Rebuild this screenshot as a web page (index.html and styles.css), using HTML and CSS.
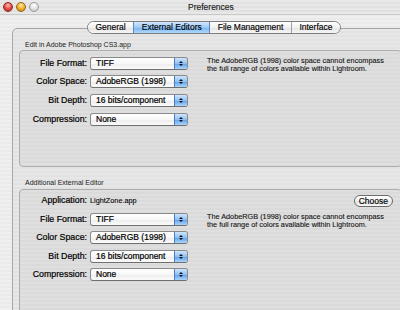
FILE: index.html
```html
<!DOCTYPE html>
<html>
<head>
  <title>Preferences</title>
  <link rel="stylesheet" href="styles.css">
</head>
<body>
<div class="window">
  <div class="titlebar">
    <div class="lights">
      <span class="light close"></span>
      <span class="light minimize"></span>
      <span class="light zoom"></span>
    </div>
    <div class="title">Preferences</div>
  </div>

  <div class="pane">
    <div class="tabs">
      <span class="tab">General</span>
      <span class="tab selected">External Editors</span>
      <span class="tab">File Management</span>
      <span class="tab">Interface</span>
    </div>

    <!-- photoshop -->
    <div class="group-title">Edit in Adobe Photoshop CS3.app</div>
    <div class="group">
      <span class="field-label">File Format:</span>
      <div class="popup"><span class="popup-value">TIFF</span><span class="popup-arrows"></span></div>
      <p class="note">The AdobeRGB (1998) color space cannot encompass<br>the full range of colors available within Lightroom.</p>

      <span class="field-label">Color Space:</span>
      <div class="popup"><span class="popup-value">AdobeRGB (1998)</span><span class="popup-arrows"></span></div>

      <span class="field-label">Bit Depth:</span>
      <div class="popup"><span class="popup-value">16 bits/component</span><span class="popup-arrows"></span></div>

      <span class="field-label">Compression:</span>
      <div class="popup"><span class="popup-value">None</span><span class="popup-arrows"></span></div>
    </div>

    <!-- additional editor -->
    <div class="group-title second">Additional External Editor</div>
    <div class="group group-extra">
      <span class="field-label">Application:</span>
      <span class="app-name">LightZone.app</span>
      <button class="choose" type="button">Choose</button>
      <p class="note note-lower">The AdobeRGB (1998) color space cannot encompass<br>the full range of colors available within Lightroom.</p>

      <span class="field-label">File Format:</span>
      <div class="popup"><span class="popup-value">TIFF</span><span class="popup-arrows"></span></div>

      <span class="field-label">Color Space:</span>
      <div class="popup"><span class="popup-value">AdobeRGB (1998)</span><span class="popup-arrows"></span></div>

      <span class="field-label">Bit Depth:</span>
      <div class="popup"><span class="popup-value">16 bits/component</span><span class="popup-arrows"></span></div>

      <span class="field-label">Compression:</span>
      <div class="popup"><span class="popup-value">None</span><span class="popup-arrows"></span></div>
    </div>
  </div>
</div>
</body>
</html>
```

FILE: styles.css
```css
body {
    margin: 0;
    height: 310px;
    overflow: hidden;
    font-family: 'Liberation Sans', Arial, sans-serif;
    color: #000;
}

.window {
    height: 310px;
    background: repeating-linear-gradient(to bottom, #efefef 0 2px, #eaeaea 2px 4px);
}

/* title bar */
.titlebar {
    height: 14px;
    display: flex;
    align-items: center;
    border-bottom: 1px solid #c9c9c9;
    background: repeating-linear-gradient(to bottom, #e8e8e8 0 2px, #e1e1e1 2px 4px);
}

.lights {
    display: flex;
    gap: 3px;
    padding-left: 3px;
}

.light {
    width: 10px;
    height: 10px;
    box-sizing: border-box;
    border-radius: 50%;
}

.close {
    background: radial-gradient(circle at 50% 30%, #fbc2bc 0, #e4544a 45%, #b3221b 100%);
    border: 1px solid #8e2a22;
}

.minimize {
    background: radial-gradient(circle at 50% 30%, #fff0b8 0, #f3b431 45%, #c77c07 100%);
    border: 1px solid #97661a;
}

.zoom {
    background: radial-gradient(circle at 50% 30%, #ffffff 0, #e3e3e3 50%, #b9b9b9 100%);
    border: 1px solid #9a9a9a;
}

.title {
    margin-left: 149px;
    font-size: 8.5px;
    color: #1a1a1a;
    -webkit-text-stroke: 0.15px #1a1a1a;
}

/* tab pane */
.pane {
    width: 383px;
    margin: 13px 0 0 12px;
    padding: 0 6px;
    border: 1px solid #a6a6a6;
    border-radius: 5px;
    background: repeating-linear-gradient(to bottom, #e7e7e7 0 2px, #e2e2e2 2px 4px);
}

.tabs {
    display: flex;
    width: fit-content;
    margin: -8px 0 0 68px;
    border: 1px solid #7c7c7c;
    border-radius: 7px;
    overflow: hidden;
}

.tab {
    height: 11px;
    line-height: 11px;
    padding: 0 7.5px;
    font-size: 8.5px;
    -webkit-text-stroke: 0.15px #000;
    background: linear-gradient(to bottom, #ffffff 0%, #f1f1f1 50%, #e3e3e3 51%, #f6f6f6 100%);
}

.tab + .tab {
    border-left: 1px solid #a2a2a2;
}

.tab.selected {
    background: linear-gradient(to bottom, #d3e8fd 0%, #9ccaf7 50%, #76b3f0 51%, #b0d9fc 100%);
    border-left-color: #5c86bd;
}

.tab.selected + .tab {
    border-left-color: #5c86bd;
}

.group-title {
    margin: 6px 0 1px 6px;
    font-size: 7px;
    line-height: 9px;
    color: #222;
}

.group-title.second {
    margin-top: 11.5px;
    margin-bottom: 1.5px;
}

.group {
    display: grid;
    grid-template-columns: 67px 98px 1fr;
    grid-auto-rows: 13px;
    column-gap: 3px;
    row-gap: 5.7px;
    padding: 5.5px 8px 40.4px 0;
    border: 1px solid #adadad;
    border-radius: 4px;
    background: repeating-linear-gradient(to bottom, #dfdfdf 0 2px, #dadada 2px 4px);
}

.group-extra {
    padding-top: 4.5px;
    row-gap: 5.5px;
}

.field-label {
    text-align: right;
    font-size: 8.8px;
    line-height: 13px;
    grid-column: 1;
    -webkit-text-stroke: 0.2px #000;
}

/* popup menus */
.popup {
    display: flex;
    height: 13px;
    box-sizing: border-box;
    border: 1px solid #8a8a8a;
    border-bottom-color: #6f6f6f;
    border-radius: 3px;
    background: linear-gradient(to bottom, #ffffff 0%, #f7f7f7 50%, #ececec 51%, #fbfbfb 100%);
    overflow: hidden;
}

.popup-value {
    flex: 1;
    padding-left: 5px;
    font-size: 8.5px;
    line-height: 11px;
    -webkit-text-stroke: 0.2px #000;
}

.popup-arrows {
    width: 12px;
    display: flex;
    flex-direction: column;
    align-items: center;
    justify-content: center;
    gap: 1px;
    border-left: 1px solid #4f7bbd;
    background: linear-gradient(to bottom, #cfe6fd 0%, #8dc1f5 50%, #5d9fe8 51%, #a9d6fd 100%);
}

.popup-arrows::before,
.popup-arrows::after {
    content: '';
    width: 0;
    height: 0;
    border-left: 2px solid transparent;
    border-right: 2px solid transparent;
}

.popup-arrows::before {
    border-bottom: 2.5px solid #111;
}

.popup-arrows::after {
    border-top: 2.5px solid #111;
}

.note {
    grid-column: 3;
    grid-row: 1 / span 4;
    margin: 0 0 0 16px;
    font-size: 7.3px;
    line-height: 8.5px;
    color: #111;
    -webkit-text-stroke: 0.1px #111;
}

.note-lower {
    grid-row: 2 / span 4;
}

.app-name {
    font-size: 7.3px;
    line-height: 13px;
    -webkit-text-stroke: 0.1px #000;
}

.choose {
    justify-self: end;
    align-self: center;
    height: 12px;
    padding: 0 4px;
    font-family: 'Liberation Sans', Arial, sans-serif;
    font-size: 8.5px;
    line-height: 10px;
    color: #000;
    -webkit-text-stroke: 0.15px #000;
    border: 1px solid #6b6b6b;
    border-radius: 6px;
    background: linear-gradient(to bottom, #ffffff 0%, #f2f2f2 50%, #e2e2e2 51%, #f7f7f7 100%);
}
```
